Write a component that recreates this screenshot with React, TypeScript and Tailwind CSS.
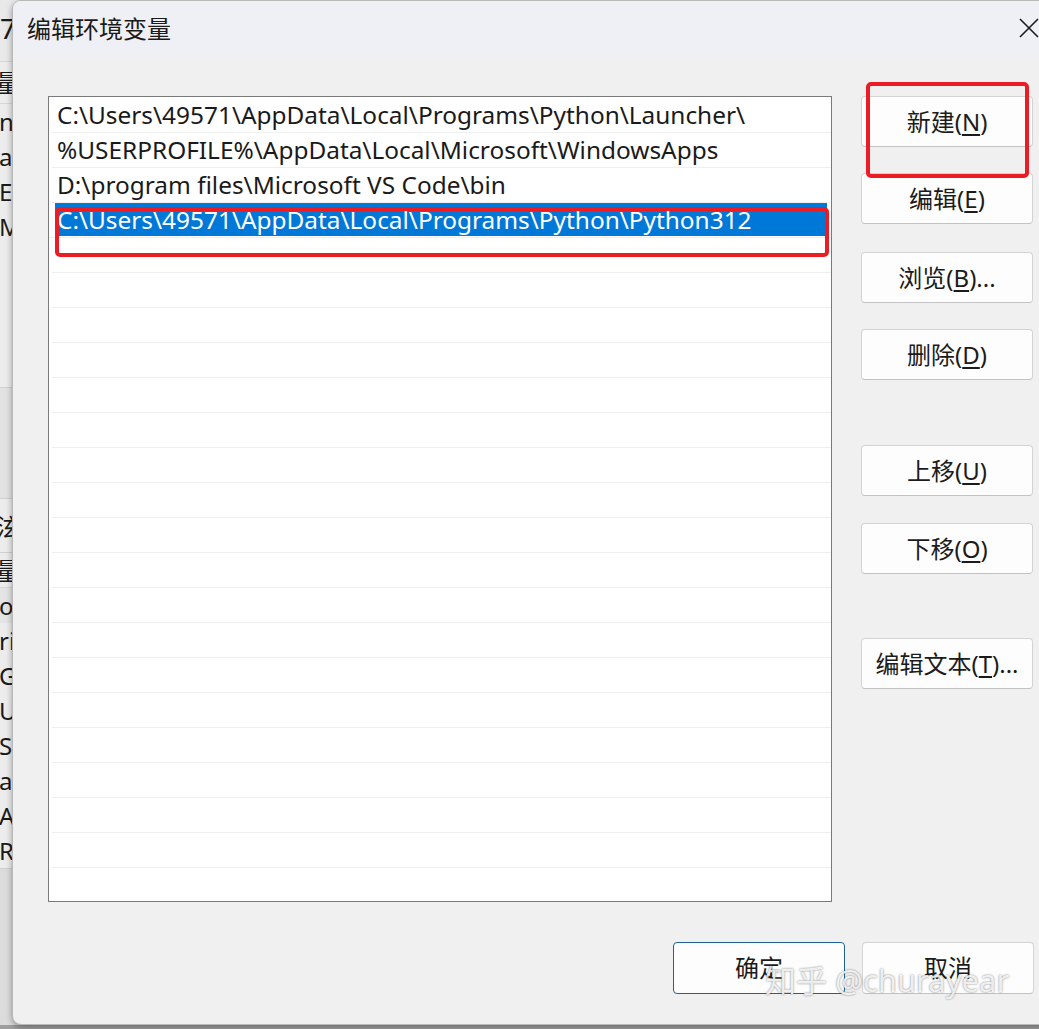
import React from 'react';

const PATHS = [
  'C:\\Users\\49571\\AppData\\Local\\Programs\\Python\\Launcher\\',
  '%USERPROFILE%\\AppData\\Local\\Microsoft\\WindowsApps',
  'D:\\program files\\Microsoft VS Code\\bin',
  'C:\\Users\\49571\\AppData\\Local\\Programs\\Python\\Python312',
];

const SELECTED = 3;
const ROW_COUNT = 23;

// right-hand buttons: label, accelerator key, suffix, top margin
const SIDE_BUTTONS: { label: string; key: string; tail: string; mt: string }[] = [
  { label: '新建', key: 'N', tail: '', mt: 'mt-0' },
  { label: '编辑', key: 'E', tail: '', mt: 'mt-[26px]' },
  { label: '浏览', key: 'B', tail: '...', mt: 'mt-[28px]' },
  { label: '删除', key: 'D', tail: '', mt: 'mt-[26px]' },
  { label: '上移', key: 'U', tail: '', mt: 'mt-[65px]' },
  { label: '下移', key: 'O', tail: '', mt: 'mt-[27px]' },
  { label: '编辑文本', key: 'T', tail: '...', mt: 'mt-[64px]' },
];

// clipped bits of the window behind the dialog
const BEHIND_TOP = ['n', 'at', 'EN', 'M'];
const BEHIND_BOTTOM = ['o', 'ri', 'G', 'U', 'S', 'at', 'A', 'R'];

function WinButton({ label, keyChar, tail, primary, className }: {
  label: string;
  keyChar: string;
  tail?: string;
  primary?: boolean;
  className?: string;
}) {
  return (
    <button
      className={`flex h-[51px] w-[172px] items-center justify-center rounded-[4px] border bg-[#fdfdfd] text-[24px] text-[#1b1b1b] ${
        primary ? 'border-[#1f6390]' : 'border-[#d3d3d3] border-b-[#c2c2c2]'
      } ${className ?? ''}`}
    >
      <span>
        {label}({<span className="underline underline-offset-[3px]">{keyChar}</span>}){tail}
      </span>
    </button>
  );
}

export default function App() {
  return (
    <div className="relative h-[1029px] w-[1039px] overflow-hidden bg-[#9f9f9f] font-['Noto_Sans','Noto_Sans_CJK_SC',sans-serif]">
      {/* Window behind the dialog, only a sliver shows */}
      <div className="flex h-[1025px] w-[40px] flex-col overflow-hidden bg-[#ececec] text-[24px] leading-[35px] text-[#1a1a1a]">
        <div className="h-[62px] border-b border-[#d6d6d6] bg-[#e9e9e9] pt-[10px] text-[28px] leading-[36px]">7</div>
        <div className="-ml-[28px] h-[42px] whitespace-nowrap border-b border-[#d6d6d6] leading-[42px]">变量</div>
        {BEHIND_TOP.map((t, i) => (
          <div key={i} className="-ml-[1px] h-[35px] whitespace-nowrap">{t}</div>
        ))}
        <div className="h-[144px] border-b border-[#d0d0d0]" />
        <div className="h-[110px] bg-[#e2e2e2]" />
        <div className="-ml-[28px] h-[55px] whitespace-nowrap border-y border-[#d0d0d0] leading-[55px]">系泫</div>
        <div className="-ml-[28px] h-[35px] whitespace-nowrap border-b border-[#d6d6d6]">变量</div>
        {BEHIND_BOTTOM.map((t, i) => (
          <div key={i} className={`-ml-[1px] h-[35px] whitespace-nowrap ${i === 0 ? 'bg-[#e4e4e4]' : ''}`}>{t}</div>
        ))}
        <div className="flex-1 border-t border-[#cfcfcf] bg-[#dcdcdc]" />
      </div>

      {/* Dialog window */}
      <div className="absolute left-[12px] top-0 flex h-[1025px] w-[1045px] flex-col overflow-hidden rounded-[9px] border border-[#b8b8b8] bg-[#f0f0f0] shadow-[0_2px_6px_rgba(0,0,0,0.35)]">
        {/* Title bar */}
        <div className="flex h-[55px] shrink-0 items-center justify-between bg-[#eff0f5] pl-[14px] pr-[16px]">
          <span className="text-[24px] text-[#1a1a1a]">编辑环境变量</span>
          <svg width="22" height="22" viewBox="0 0 22 22" className="-mt-[2px]">
            <path d="M2 2 L20 20 M20 2 L2 20" stroke="#1a1a1a" strokeWidth="1.6" />
          </svg>
        </div>

        {/* Body */}
        <div className="flex pl-[35px] pt-[40px]">
          {/* Path list */}
          <div className="h-[806px] w-[784px] overflow-hidden border border-[#7a7a7a] bg-white pt-[1px] text-[24.4px] text-[#1a1a1a]">
            {Array.from({ length: ROW_COUNT }).map((_, i) => {
              const text = PATHS[i];
              if (i === SELECTED) {
                return (
                  <div key={i} className="flex h-[35px] items-stretch border-b border-[#efefef] pb-[1px] pl-[6px] pr-[4px]">
                    <div className="flex flex-1 items-center whitespace-nowrap border-t border-dotted border-[#3a6fa8] bg-[#0078d7] pl-[2px] leading-none text-white">
                      {text}
                    </div>
                  </div>
                );
              }
              return (
                <div key={i} className="ml-[3px] flex h-[35px] items-center whitespace-nowrap border-b border-[#efefef] pl-[5px] leading-none">
                  {text ?? ''}
                </div>
              );
            })}
          </div>

          {/* Action buttons */}
          <div className="ml-[29px] flex flex-col">
            {SIDE_BUTTONS.map((b) => (
              <WinButton key={b.key} label={b.label} keyChar={b.key} tail={b.tail} className={b.mt} />
            ))}
          </div>
        </div>

        {/* OK / Cancel */}
        <div className="flex gap-[17px] pl-[660px] pt-[40px]">
          <button className="flex h-[52px] w-[172px] items-center justify-center rounded-[4px] border border-[#1f6390] bg-[#fdfdfd] text-[24px] text-[#1b1b1b]">
            确定
          </button>
          <button className="flex h-[52px] w-[172px] items-center justify-center rounded-[4px] border border-[#d3d3d3] border-b-[#c2c2c2] bg-[#fdfdfd] text-[24px] text-[#1b1b1b]">
            取消
          </button>
        </div>
      </div>

      {/* Red annotation boxes */}
      <div className="absolute left-[55px] top-[207px] h-[50px] w-[774px] rounded-[5px] border-[4px] border-[#ec1c24]" />
      <div className="absolute left-[866px] top-[82px] h-[96px] w-[163px] rounded-[5px] border-[4px] border-[#ec1c24]" />

      {/* Watermark */}
      <div className="absolute left-[765px] top-[957px] whitespace-nowrap text-[31px] text-white/85 [text-shadow:0_0_2px_rgba(0,0,0,0.55)]">
        知乎 @churayear
      </div>
    </div>
  );
}
